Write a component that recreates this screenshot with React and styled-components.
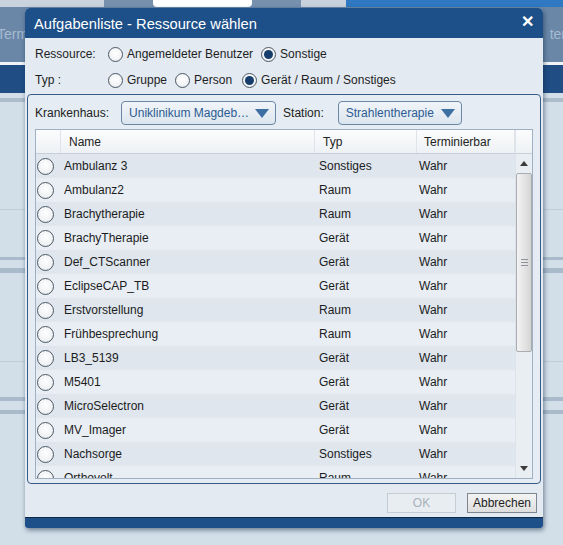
import React from "react";
import styled, { createGlobalStyle } from "styled-components";

const Global = createGlobalStyle`
  html, body { margin: 0; padding: 0; }
  body { font-family: "Liberation Sans", Arial, sans-serif; background: #d3dfe8; }
  * { box-sizing: border-box; }
`;

const Page = styled.div`
  position: relative;
  width: 563px;
  height: 545px;
  overflow: hidden;
  background: #d3dfe8;
  display: flex;
  flex-direction: column;
`;

const TopStrip = styled.div`
  height: 7px;
  display: flex;
  background: #c9d4de;
  overflow: hidden;
`;
const StripSeg = styled.div`
  width: ${(p) => p.w}px;
  background: ${(p) => p.c};
  flex: ${(p) => (p.grow ? 1 : "none")};
  display: flex;
  justify-content: center;
  align-items: flex-end;
  overflow: hidden;
`;
const WhiteTab = styled.div`
  width: 99px;
  height: 7px;
  background: #fff;
  border-radius: 0 0 4px 4px;
`;

const HeaderBand = styled.div`
  height: 55px;
  background: #6a87a8;
  display: flex;
  align-items: center;
  justify-content: space-between;
  padding: 0 0 2px 0;
  color: #a6bbd1;
  font-size: 14px;
`;
const BandText = styled.span`
  margin: 0 ${(p) => p.mr || 0}px 0 ${(p) => p.ml || 0}px;
`;
const WhiteLine = styled.div`
  height: 3px;
  background: #f1f4f7;
`;
const NavBand = styled.div`
  height: 28px;
  background: #1f4d84;
`;
const Content = styled.div`
  flex: 1;
  display: flex;
  flex-direction: column;
`;
const Stripe = styled.div`
  height: ${(p) => p.h}px;
  margin-top: ${(p) => p.mt}px;
  background: ${(p) => p.c};
`;

const Dialog = styled.div`
  position: absolute;
  left: 25px;
  top: 8px;
  width: 518px;
  height: 520px;
  background: #e3eaf2;
  border-radius: 5px 5px 3px 3px;
  box-shadow: 1px 2px 5px rgba(20, 40, 70, 0.55);
  display: flex;
  flex-direction: column;
  overflow: hidden;
`;
const TitleBar = styled.div`
  height: 30px;
  flex: none;
  background: #1d4f88;
  color: #fff;
  display: flex;
  align-items: center;
  justify-content: space-between;
  padding: 1px 9px 0 9px;
  font-size: 14.7px;
`;
const CloseX = styled.span`
  font-size: 16px;
  font-weight: bold;
  margin-top: -4px;
`;
const Body = styled.div`
  flex: 1;
  display: flex;
  flex-direction: column;
  padding: 3px 2px 0 2px;
`;
const OptRow = styled.div`
  height: 26px;
  flex: none;
  display: flex;
  align-items: center;
  padding-left: 8px;
  font-size: 12px;
  color: #1e1e1e;
`;
const OptLabel = styled.span`
  width: 73px;
`;
const RadioWrap = styled.label`
  display: flex;
  align-items: center;
  margin-right: ${(p) => p.mr || 5}px;
`;
const Circle = styled.span`
  width: 15px;
  height: 15px;
  border-radius: 50%;
  border: 1px solid #4a5764;
  background: radial-gradient(circle at 50% 40%, #ffffff 0%, #f2f4f6 60%, #dfe3e8 100%);
  display: inline-flex;
  align-items: center;
  justify-content: center;
  margin-right: 4px;
  flex: none;
  &::after {
    content: "";
    width: 9px;
    height: 9px;
    border-radius: 50%;
    background: ${(p) => (p.on ? "#173d6c" : "transparent")};
  }
`;

const Radio = ({ on, label, mr }) => (
  <RadioWrap mr={mr}>
    <Circle on={on} />
    <span>{label}</span>
  </RadioWrap>
);

const Group = styled.div`
  margin-top: 1px;
  padding: 6px 7px 4px 7px;
  border: 1px solid #365b86;
  border-radius: 4px;
  height: 390px;
  flex: none;
  display: flex;
  flex-direction: column;
  background: #e5ecf3;
`;
const FilterRow = styled.div`
  height: 24px;
  flex: none;
  display: flex;
  align-items: center;
  font-size: 12px;
  color: #222;
  margin-bottom: 4px;
`;
const FilterLabel = styled.span`
  margin-right: ${(p) => p.mr}px;
`;
const Dropdown = styled.div`
  width: ${(p) => p.w}px;
  height: 24px;
  border: 1px solid #6c86a6;
  border-radius: 4px;
  background: linear-gradient(#f1f5f9, #dce5ee);
  color: #2c5b93;
  display: flex;
  align-items: center;
  justify-content: space-between;
  padding: 0 6px 0 7px;
  margin-right: 7px;
  font-size: 12px;
  white-space: nowrap;
`;
const Tri = styled.span`
  width: 0;
  height: 0;
  border-left: 7px solid transparent;
  border-right: 7px solid transparent;
  border-top: 9px solid #3d6fa3;
  margin-left: 6px;
`;

const Table = styled.div`
  flex: 1;
  border: 1px solid #9fb0c2;
  display: flex;
  background: #e8eef4;
  overflow: hidden;
`;
const TableMain = styled.div`
  flex: 1;
  display: flex;
  flex-direction: column;
  overflow: hidden;
`;
const Cols = styled.div`
  display: grid;
  grid-template-columns: 25px 254px 102px 1fr;
  height: 24px;
  align-items: center;
  font-size: 12px;
  color: #1c1c1c;
  flex: none;
  background: ${(p) =>
    p.head ? "linear-gradient(#fbfcfd, #eef1f4)" : p.alt ? "#e8eef4" : "#dfe6ee"};
  border-bottom: ${(p) => (p.head ? "1px solid #c7d0da" : "none")};
`;
const HeadCell = styled.div`
  height: 100%;
  display: flex;
  align-items: center;
  padding-left: ${(p) => p.pl || 0}px;
  border-right: 1px solid #dfe4ea;
  color: #222;
`;
const Cell = styled.div`
  padding-left: ${(p) => p.pl || 0}px;
  white-space: nowrap;
`;
const RowRadio = styled.span`
  display: block;
  width: 17px;
  height: 17px;
  border-radius: 50%;
  border: 1px solid #4c5966;
  background: radial-gradient(circle at 50% 40%, #ffffff 0%, #f0f2f4 60%, #dde1e6 100%);
  margin-left: 1px;
`;

const ScrollCol = styled.div`
  width: 17px;
  display: flex;
  flex-direction: column;
  background: #e9eef3;
  border-left: 1px solid #dde3ea;
`;
const ScrollHead = styled.div`
  height: 24px;
  flex: none;
  background: linear-gradient(#fbfcfd, #eef1f4);
  border-bottom: 1px solid #c7d0da;
`;
const Arrow = styled.div`
  height: ${(p) => p.h}px;
  flex: none;
  display: flex;
  align-items: center;
  justify-content: center;
  &::after {
    content: "";
    border-left: 4px solid transparent;
    border-right: 4px solid transparent;
    ${(p) => (p.up ? "border-bottom: 5px solid #3a3a3a;" : "border-top: 5px solid #3a3a3a;")}
  }
`;
const Thumb = styled.div`
  height: 179px;
  flex: none;
  border: 1px solid #a9adb2;
  border-radius: 2px;
  background: linear-gradient(90deg, #f3f3f3, #e2e2e2 60%, #d4d4d4);
  display: flex;
  align-items: center;
  justify-content: center;
`;
const Grip = styled.div`
  width: 7px;
  height: 7px;
  border-top: 1px solid #8f949a;
  border-bottom: 1px solid #8f949a;
  position: relative;
  &::after {
    content: "";
    position: absolute;
    left: 0;
    right: 0;
    top: 2px;
    border-top: 1px solid #8f949a;
  }
`;
const Track = styled.div`
  flex: 1;
`;

const Footer = styled.div`
  flex: 1;
  display: flex;
  align-items: flex-start;
  justify-content: flex-end;
  gap: 11px;
  padding: 9px 4px 0 0;
`;
const Btn = styled.div`
  width: ${(p) => p.w}px;
  height: 20px;
  display: flex;
  align-items: center;
  justify-content: center;
  font-size: 12px;
  border: 1px solid ${(p) => (p.disabled ? "#c4ccd4" : "#7e8790")};
  background: ${(p) =>
    p.disabled ? "#e8edf2" : "linear-gradient(#f4f4f4, #dedede)"};
  color: ${(p) => (p.disabled ? "#a9b1ba" : "#1e1e1e")};
`;
const BottomBar = styled.div`
  height: 11px;
  flex: none;
  background: #1d4f88;
  border-top: 1px solid #0e2744;
`;

const rows = [
  ["Ambulanz 3", "Sonstiges"],
  ["Ambulanz2", "Raum"],
  ["Brachytherapie", "Raum"],
  ["BrachyTherapie", "Gerät"],
  ["Def_CTScanner", "Gerät"],
  ["EclipseCAP_TB", "Gerät"],
  ["Erstvorstellung", "Raum"],
  ["Frühbesprechung", "Raum"],
  ["LB3_5139", "Gerät"],
  ["M5401", "Gerät"],
  ["MicroSelectron", "Gerät"],
  ["MV_Imager", "Gerät"],
  ["Nachsorge", "Sonstiges"],
  ["Orthovolt", "Raum"],
];

export default function App() {
  return (
    <>
      <Global />
      <Page>
        <TopStrip>
          <StripSeg w={104} c="#c9d3dd" />
          <StripSeg w={197} c="#7690ae">
            <WhiteTab />
          </StripSeg>
          <StripSeg w={45} c="#c8d2dc" />
          <StripSeg grow c="#2e79c2" />
        </TopStrip>
        <HeaderBand>
          <BandText ml={-3}>Term</BandText>
          <BandText mr={-3}>ter</BandText>
        </HeaderBand>
        <WhiteLine />
        <NavBand />
        <Content>
          <Stripe mt={5} h={4} c="#aebdcc" />
          <Stripe mt={107} h={1} c="#bfcdd9" />
          <Stripe mt={47} h={3} c="#a9bacb" />
          <Stripe mt={8} h={5} c="#a9bacb" />
          <Stripe mt={88} h={1} c="#bfcdd9" />
          <Stripe mt={35} h={4} c="#a9bacb" />
          <Stripe mt={9} h={4} c="#a9bacb" />
        </Content>

        <Dialog>
          <TitleBar>
            <span>Aufgabenliste - Ressource wählen</span>
            <CloseX>✕</CloseX>
          </TitleBar>
          <Body>
            <OptRow>
              <OptLabel>Ressource:</OptLabel>
              <Radio label="Angemeldeter Benutzer" mr={8} />
              <Radio on label="Sonstige" />
            </OptRow>
            <OptRow>
              <OptLabel>Typ :</OptLabel>
              <Radio label="Gruppe" mr={8} />
              <Radio label="Person" mr={10} />
              <Radio on label="Gerät / Raum / Sonstiges" />
            </OptRow>
            <Group>
              <FilterRow>
                <FilterLabel mr={12}>Krankenhaus:</FilterLabel>
                <Dropdown w={155}>
                  <span>Uniklinikum Magdeb…</span>
                  <Tri />
                </Dropdown>
                <FilterLabel mr={14}>Station:</FilterLabel>
                <Dropdown w={124}>
                  <span>Strahlentherapie</span>
                  <Tri />
                </Dropdown>
              </FilterRow>
              <Table>
                <TableMain>
                  <Cols head>
                    <HeadCell />
                    <HeadCell pl={8}>Name</HeadCell>
                    <HeadCell pl={8}>Typ</HeadCell>
                    <HeadCell pl={7}>Terminierbar</HeadCell>
                  </Cols>
                  {rows.map(([name, typ], i) => (
                    <Cols key={name} alt={i % 2 === 1}>
                      <Cell>
                        <RowRadio />
                      </Cell>
                      <Cell pl={3}>{name}</Cell>
                      <Cell pl={4}>{typ}</Cell>
                      <Cell pl={2}>Wahr</Cell>
                    </Cols>
                  ))}
                </TableMain>
                <ScrollCol>
                  <ScrollHead />
                  <Arrow up h={19} />
                  <Thumb>
                    <Grip />
                  </Thumb>
                  <Track />
                  <Arrow h={20} />
                </ScrollCol>
              </Table>
            </Group>
            <Footer>
              <Btn disabled w={69}>OK</Btn>
              <Btn w={70}>Abbrechen</Btn>
            </Footer>
          </Body>
          <BottomBar />
        </Dialog>
      </Page>
    </>
  );
}
